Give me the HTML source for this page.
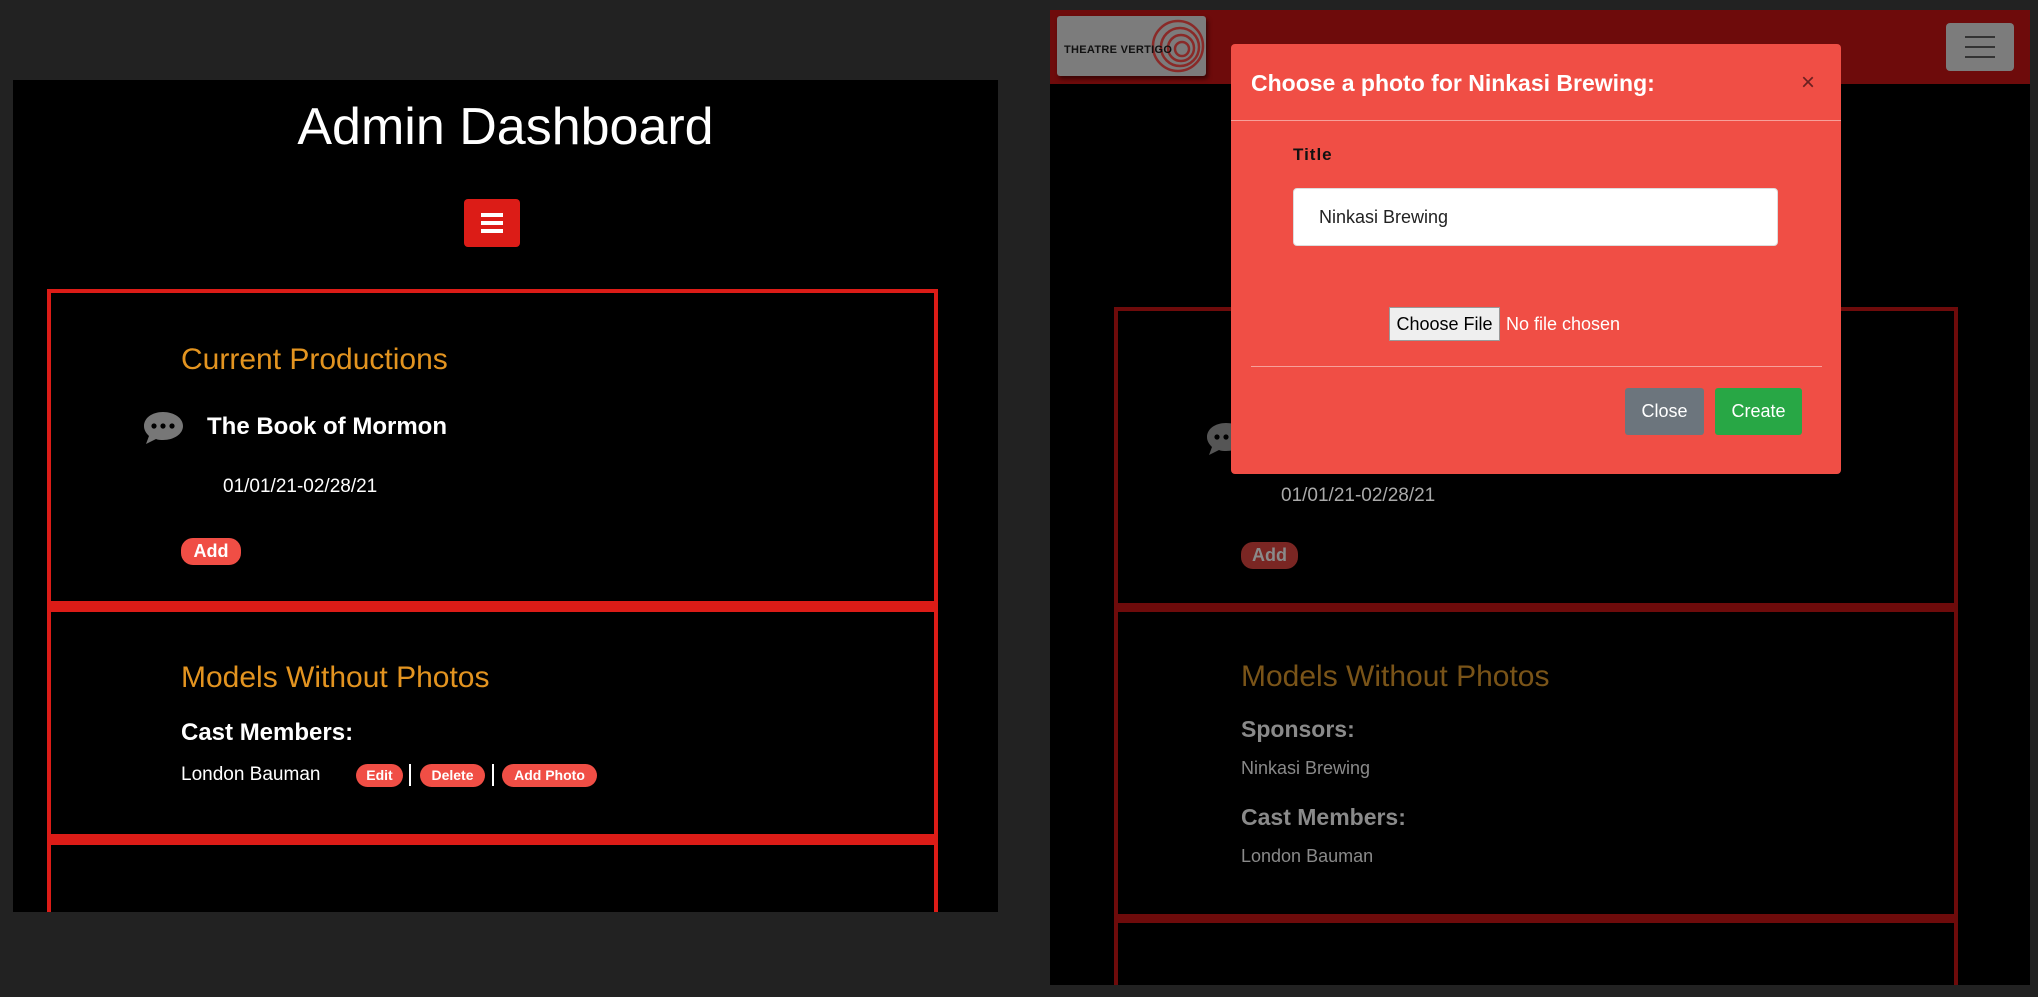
<!DOCTYPE html>
<html><head><meta charset="utf-8"><style>
*{margin:0;padding:0;box-sizing:border-box}
body{width:2038px;height:997px;background:#222;position:relative;overflow:hidden;font-family:"Liberation Sans",sans-serif}
.a{position:absolute}
.pill{position:absolute;background:#f04e45;color:#fff;font-weight:bold;border-radius:12px;text-align:center}
</style></head><body>
<!-- LEFT PANEL -->
<div class="a" style="left:13px;top:80px;width:985px;height:832px;background:#000"></div>
<div class="a" style="left:13px;top:97px;width:985px;text-align:center;color:#fff;font-size:52px;line-height:60px">Admin Dashboard</div>
<div class="a" style="left:464px;top:199px;width:56px;height:48px;background:#dc1c17;border-radius:4px"></div>
<div class="a" style="left:481px;top:213px;width:22px;height:4px;background:#fff"></div>
<div class="a" style="left:481px;top:221px;width:22px;height:4px;background:#fff"></div>
<div class="a" style="left:481px;top:229px;width:22px;height:4px;background:#fff"></div>
<div class="a" style="left:47px;top:289px;width:891px;height:623px;border:4px solid #dc1c17;border-bottom:none"></div>
<div class="a" style="left:47px;top:601px;width:891px;height:11px;background:#dc1c17"></div>
<div class="a" style="left:47px;top:834px;width:891px;height:11px;background:#dc1c17"></div>
<div class="a" style="left:181px;top:342px;color:#e39420;font-size:30px;line-height:36px">Current Productions</div>
<svg class="a" style="left:141px;top:410px" width="44" height="36" viewBox="0 0 44 36"><path d="M22 2C11 2 3 8 3 16c0 4 2 7 5 10L5 34l10-5c2 1 5 1 7 1 11 0 20-6 20-14S33 2 22 2z" fill="#777"/><circle cx="13" cy="16" r="2.6" fill="#000"/><circle cx="22" cy="16" r="2.6" fill="#000"/><circle cx="31" cy="16" r="2.6" fill="#000"/></svg>
<div class="a" style="left:207px;top:412px;color:#fff;font-size:24px;font-weight:bold;line-height:30px">The Book of Mormon</div>
<div class="a" style="left:223px;top:475px;color:#fff;font-size:19px;line-height:24px">01/01/21-02/28/21</div>
<div class="pill" style="left:181px;top:538px;width:60px;height:27px;font-size:18px;line-height:27px">Add</div>
<div class="a" style="left:181px;top:660px;color:#e39420;font-size:30px;line-height:36px">Models Without Photos</div>
<div class="a" style="left:181px;top:718px;color:#fff;font-size:24px;font-weight:bold;line-height:30px">Cast Members:</div>
<div class="a" style="left:181px;top:763px;color:#fff;font-size:19px;line-height:24px">London Bauman</div>
<div class="pill" style="left:356px;top:764px;width:47px;height:23px;font-size:14px;line-height:23px">Edit</div>
<div class="a" style="left:409px;top:764px;width:2px;height:22px;background:#fff"></div>
<div class="pill" style="left:420px;top:764px;width:65px;height:23px;font-size:14px;line-height:23px">Delete</div>
<div class="a" style="left:492px;top:764px;width:2px;height:22px;background:#fff"></div>
<div class="pill" style="left:502px;top:764px;width:95px;height:23px;font-size:14px;line-height:23px">Add Photo</div>

<!-- RIGHT PANEL -->
<div class="a" style="left:1050px;top:10px;width:980px;height:975px;background:#000"></div>
<div class="a" style="left:1050px;top:10px;width:980px;height:74px;background:#6e0b0b"></div>
<div class="a" style="left:1057px;top:16px;width:149px;height:60px;background:#7c7c7c;border-radius:3px;box-shadow:2px 3px 4px #3a0505"></div>
<svg class="a" style="left:1150px;top:18px" width="56" height="56" viewBox="0 0 56 56" fill="none" stroke="#8a2a28" stroke-width="2.5"><circle cx="28" cy="28" r="25"/><circle cx="30" cy="29" r="19"/><circle cx="31" cy="30" r="13"/><circle cx="32" cy="31" r="7"/></svg>
<div class="a" style="left:1064px;top:44px;font-size:11px;font-weight:bold;color:#111;letter-spacing:0.3px">THEATRE VERTIGO</div>
<div class="a" style="left:1946px;top:23px;width:68px;height:48px;background:#7c7c7c;border-radius:4px"></div>
<div class="a" style="left:1965px;top:36px;width:30px;height:2px;background:#333"></div>
<div class="a" style="left:1965px;top:46px;width:30px;height:2px;background:#333"></div>
<div class="a" style="left:1965px;top:56px;width:30px;height:2px;background:#333"></div>
<div class="a" style="left:1114px;top:307px;width:844px;height:678px;border:4px solid #6e0b0b;border-bottom:none"></div>
<div class="a" style="left:1114px;top:603px;width:844px;height:9px;background:#6e0b0b"></div>
<div class="a" style="left:1114px;top:914px;width:844px;height:9px;background:#6e0b0b"></div>
<svg class="a" style="left:1204px;top:421px" width="44" height="36" viewBox="0 0 44 36"><path d="M22 2C11 2 3 8 3 16c0 4 2 7 5 10L5 34l10-5c2 1 5 1 7 1 11 0 20-6 20-14S33 2 22 2z" fill="#555"/><circle cx="13" cy="16" r="2.6" fill="#000"/><circle cx="22" cy="16" r="2.6" fill="#000"/></svg>
<div class="a" style="left:1281px;top:484px;color:#aaa;font-size:19px;line-height:24px">01/01/21-02/28/21</div>
<div class="pill" style="left:1241px;top:542px;width:57px;height:27px;font-size:18px;line-height:27px;background:#7a2623;color:#8a8a8a">Add</div>
<div class="a" style="left:1241px;top:659px;color:#7a5418;font-size:30px;line-height:36px">Models Without Photos</div>
<div class="a" style="left:1241px;top:714px;color:#8a8a8a;font-size:23px;font-weight:bold;line-height:30px">Sponsors:</div>
<div class="a" style="left:1241px;top:756px;color:#8a8a8a;font-size:18px;line-height:24px">Ninkasi Brewing</div>
<div class="a" style="left:1241px;top:802px;color:#8a8a8a;font-size:23px;font-weight:bold;line-height:30px">Cast Members:</div>
<div class="a" style="left:1241px;top:844px;color:#8a8a8a;font-size:18px;line-height:24px">London Bauman</div>

<!-- MODAL -->
<div class="a" style="left:1231px;top:44px;width:610px;height:430px;background:#f04e45;border-radius:4px"></div>
<div class="a" style="left:1251px;top:68px;color:#fff;font-size:23px;font-weight:bold;line-height:30px">Choose a photo for Ninkasi Brewing:</div>
<div class="a" style="left:1801px;top:68px;color:#6a2020;font-size:24px;line-height:30px">×</div>
<div class="a" style="left:1231px;top:120px;width:610px;height:1px;background:#f7a09a"></div>
<div class="a" style="left:1293px;top:145px;color:#111;font-size:17px;font-weight:bold;letter-spacing:1px;line-height:20px">Title</div>
<div class="a" style="left:1293px;top:188px;width:485px;height:58px;background:#fff;border-radius:4px;border:1px solid #ddd"></div>
<div class="a" style="left:1319px;top:206px;color:#222;font-size:18px;line-height:22px">Ninkasi Brewing</div>
<div class="a" style="left:1389px;top:307px;width:111px;height:34px;background:#efefef;border:1px solid #999;color:#000;font-size:18px;line-height:32px;text-align:center">Choose File</div>
<div class="a" style="left:1506px;top:313px;color:#fff;font-size:18px;line-height:22px">No file chosen</div>
<div class="a" style="left:1251px;top:366px;width:571px;height:1px;background:#f7a09a"></div>
<div class="a" style="left:1625px;top:388px;width:79px;height:47px;background:#6c757d;border-radius:3px;color:#fff;font-size:18px;line-height:47px;text-align:center">Close</div>
<div class="a" style="left:1715px;top:388px;width:87px;height:47px;background:#28a745;border-radius:3px;color:#fff;font-size:18px;line-height:47px;text-align:center">Create</div>
</body></html>
